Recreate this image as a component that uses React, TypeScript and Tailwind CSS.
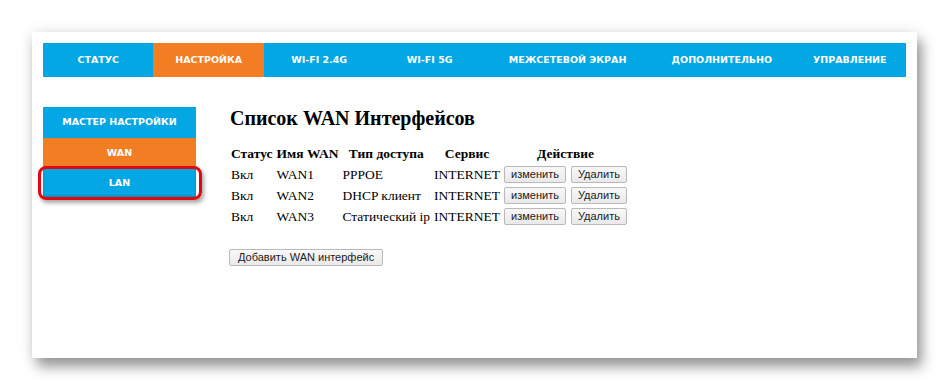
import React from "react"

const topMenu = [
  { label: "СТАТУС", w: "w-[111px]" },
  { label: "НАСТРОЙКА", w: "w-[111px]", active: true },
  { label: "WI-FI 2.4G", w: "w-[111px]" },
  { label: "WI-FI 5G", w: "w-[111px]" },
  { label: "МЕЖСЕТЕВОЙ ЭКРАН", w: "w-[166px]" },
  { label: "ДОПОЛНИТЕЛЬНО", w: "w-[144px]" },
  { label: "УПРАВЛЕНИЕ", w: "w-[113px]" },
]

const rows = [
  { status: "Вкл", name: "WAN1", type: "PPPOE", service: "INTERNET" },
  { status: "Вкл", name: "WAN2", type: "DHCP клиент", service: "INTERNET" },
  { status: "Вкл", name: "WAN3", type: "Статический ip", service: "INTERNET" },
]

const OldButton = ({ children, wide }: { children: React.ReactNode; wide?: boolean }) => (
  <button
    className={`h-[17px] ${wide ? "px-[8px]" : "px-[6px]"} border border-[#b9b9b9] rounded-[2px] bg-gradient-to-b from-[#f8f8f8] to-[#e9e9e9] text-[11px] leading-[15px] text-[#222] font-['Liberation_Sans',Arial,sans-serif]`}
  >
    {children}
  </button>
)

export default function App() {
  return (
    <div className="w-[950px] h-[390px] bg-white pt-[32px] pl-[32px] font-['Liberation_Serif',serif] text-black">
      <div className="w-[885px] h-[326px] bg-white p-[11px] shadow-[5px_9px_12px_rgba(0,0,0,0.38),0_0_14px_rgba(0,0,0,0.1)]">
        {/* Top menu */}
        <div className="flex h-[34px] bg-[#02a7e3] font-['DejaVu_Sans',Verdana,sans-serif] text-[9.5px] font-bold text-white">
          {topMenu.map((m) => (
            <div
              key={m.label}
              className={`${m.w} flex items-center justify-center ${m.active ? "bg-[#f37d22]" : ""}`}
            >
              {m.label}
            </div>
          ))}
        </div>

        <div className="flex mt-[30px]">
          {/* Side menu */}
          <div className="w-[153px] font-['DejaVu_Sans',Verdana,sans-serif] text-[9.5px] font-bold text-white">
            <div className="h-[31px] flex items-center justify-center bg-[#02a7e3]">МАСТЕР НАСТРОЙКИ</div>
            <div className="h-[30px] flex items-center justify-center bg-[#f37d22]">WAN</div>
            <div className="relative h-[31px] flex items-center justify-center bg-[#02a7e3] shadow-[inset_0_-3px_3px_rgba(0,0,0,0.2)]">
              LAN
              <div className="absolute -left-[5px] -right-[6px] -top-[2px] -bottom-[1px] rounded-[8px] border-[3px] border-[#e3070d] shadow-[2px_3px_4px_rgba(0,0,0,0.35)]" />
            </div>
          </div>

          {/* Content */}
          <div className="ml-[34px]">
            <h1 className="text-[20px] leading-[22px] font-bold">Список WAN Интерфейсов</h1>
            <table className="mt-[14px] border-separate border-spacing-[2px] text-[13.5px] leading-[16px] -ml-[2px]">
              <thead>
                <tr>
                  <th className="p-[1px] font-bold">Статус</th>
                  <th className="p-[1px] font-bold">Имя WAN</th>
                  <th className="p-[1px] font-bold">Тип доступа</th>
                  <th className="p-[1px] font-bold">Сервис</th>
                  <th className="p-[1px] font-bold">Действие</th>
                </tr>
              </thead>
              <tbody>
                {rows.map((r) => (
                  <tr key={r.name}>
                    <td className="p-[1px] align-middle">{r.status}</td>
                    <td className="p-[1px] align-middle">{r.name}</td>
                    <td className="p-[1px] align-middle whitespace-nowrap">{r.type}</td>
                    <td className="p-[1px] align-middle">{r.service}</td>
                    <td className="p-[1px] align-middle">
                      <div className="flex gap-[5px]">
                        <OldButton>изменить</OldButton>
                        <OldButton>Удалить</OldButton>
                      </div>
                    </td>
                  </tr>
                ))}
              </tbody>
            </table>
            <div className="mt-[16px] -ml-[1px]">
              <OldButton wide>Добавить WAN интерфейс</OldButton>
            </div>
          </div>
        </div>
      </div>
    </div>
  )
}
